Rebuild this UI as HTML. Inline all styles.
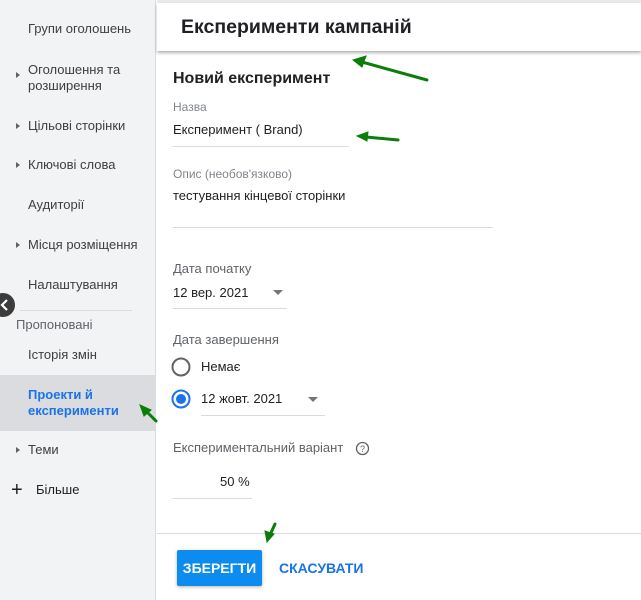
<!DOCTYPE html>
<html><head><meta charset="utf-8">
<style>
*{margin:0;padding:0;box-sizing:border-box}
body{width:641px;height:600px;overflow:hidden;background:#fff;font-family:"Liberation Sans","Noto Sans CJK SC",sans-serif;position:relative;color:#202124}
.a{position:absolute;white-space:nowrap}
.side{position:absolute;left:0;top:0;width:156px;height:600px;background:#f1f3f4;border-right:1px solid #dadce0}
.si{font-size:13px;color:#3c4043;line-height:16px}
.tri{position:absolute;width:0;height:0;border-top:3px solid transparent;border-bottom:3px solid transparent;border-left:4px solid #5f6368}
.lbl{font-size:12px;color:#80868b;line-height:14px}
.lbl2{font-size:13px;color:#5f6368;line-height:16px}
.val{font-size:13px;color:#202124;line-height:16px}
.ul{position:absolute;height:1px;background:#dadce0}
.dd{position:absolute;width:0;height:0;border-left:5px solid transparent;border-right:5px solid transparent;border-top:5px solid #757575}
</style></head><body>
<div class="side">
  <div class="a si" style="left:28px;top:21px">Групи оголошень</div>
  <div class="tri" style="left:16px;top:72px"></div>
  <div class="a si" style="left:28px;top:62px">Оголошення та</div>
  <div class="a si" style="left:28px;top:78px">розширення</div>
  <div class="tri" style="left:16px;top:123px"></div>
  <div class="a si" style="left:28px;top:118px">Цільові сторінки</div>
  <div class="tri" style="left:16px;top:162px"></div>
  <div class="a si" style="left:28px;top:157px">Ключові слова</div>
  <div class="a si" style="left:28px;top:197px">Аудиторії</div>
  <div class="tri" style="left:16px;top:242px"></div>
  <div class="a si" style="left:28px;top:237px">Місця розміщення</div>
  <div class="a si" style="left:28px;top:277px">Налаштування</div>
  <div style="position:absolute;left:20px;top:310px;width:112px;height:1px;background:#dadce0"></div>
  <div class="a si" style="left:16px;top:317px;color:#5f6368">Пропоновані</div>
  <div class="a si" style="left:28px;top:347px">Історія змін</div>
  <div style="position:absolute;left:0;top:375px;width:156px;height:56px;background:#dadce0"></div>
  <div class="a si" style="left:28px;top:387px;color:#1a73e8;font-weight:bold">Проекти й</div>
  <div class="a si" style="left:28px;top:403px;color:#1a73e8;font-weight:bold">експерименти</div>
  <div class="tri" style="left:16px;top:447px"></div>
  <div class="a si" style="left:28px;top:442px">Теми</div>
  <div class="a" style="left:11px;top:481px;font-size:20px;line-height:18px;color:#202124">+</div>
  <div class="a si" style="left:36px;top:482px;color:#202124">Більше</div>
</div>
<svg class="a" style="left:0;top:0" width="641" height="600">
  <circle cx="3" cy="305" r="12" fill="#3c3c3c"/>
  <path d="M7 300l-5 5 5 5" stroke="#fff" stroke-width="2.2" fill="none"/>
</svg>
<div style="position:absolute;left:157px;top:0;width:484px;height:3px;background:#e8eaed"></div>
<div style="position:absolute;left:157px;top:3px;width:484px;height:48px;background:#fff;box-shadow:0 2px 3px rgba(0,0,0,.3)"></div>
<div class="a" style="left:181px;top:15px;font-size:19.5px;font-weight:bold;line-height:24px;color:#202124">Експерименти кампаній</div>
<div class="a" style="left:173px;top:69px;font-size:16px;font-weight:bold;line-height:19px;color:#202124">Новий експеримент</div>
<div class="a lbl" style="left:173px;top:100px">Назва</div>
<div class="a val" style="left:173px;top:122px">Експеримент ( Brand)</div>
<div class="ul" style="left:173px;top:146px;width:176px"></div>
<div class="a lbl" style="left:173px;top:167px">Опис (необов'язково)</div>
<div class="a val" style="left:173px;top:188px">тестування кінцевої сторінки</div>
<div class="ul" style="left:173px;top:227px;width:320px"></div>
<div class="a lbl2" style="left:173px;top:261px">Дата початку</div>
<div class="a val" style="left:173px;top:285px">12 вер. 2021</div>
<div class="dd" style="left:273px;top:290px"></div>
<div class="ul" style="left:173px;top:308px;width:114px"></div>
<div class="a lbl2" style="left:173px;top:332px">Дата завершення</div>
<svg class="a" style="left:170px;top:356px" width="24" height="56">
  <circle cx="11" cy="11" r="8.5" fill="none" stroke="#5f6368" stroke-width="2"/>
  <circle cx="11" cy="43" r="8.5" fill="none" stroke="#1a73e8" stroke-width="2"/>
  <circle cx="11" cy="43" r="5" fill="#1a73e8"/>
</svg>
<div class="a val" style="left:201px;top:359px">Немає</div>
<div class="a val" style="left:201px;top:391px">12 жовт. 2021</div>
<div class="dd" style="left:308px;top:397px"></div>
<div class="ul" style="left:201px;top:415px;width:124px"></div>
<div class="a lbl2" style="left:173px;top:440px">Експериментальний варіант</div>
<svg class="a" style="left:355px;top:441px" width="15" height="15">
  <circle cx="7.5" cy="7.5" r="6" fill="none" stroke="#5f6368" stroke-width="1.3"/>
  <text x="7.5" y="11" font-size="9" text-anchor="middle" fill="#5f6368" font-family="Liberation Sans">?</text>
</svg>
<div class="a val" style="left:220px;top:474px">50 %</div>
<div class="ul" style="left:173px;top:498px;width:79px"></div>
<div style="position:absolute;left:157px;top:533px;width:484px;height:1px;background:#dadce0"></div>
<div class="a" style="left:177px;top:550px;width:85px;height:36px;background:#0d8cf0;border-radius:2px;box-shadow:0 1px 3px rgba(0,0,0,.3);color:#fff;font-weight:bold;font-size:14px;line-height:36px;text-align:center">ЗБЕРЕГТИ</div>
<div class="a" style="left:279px;top:560px;color:#1a73e8;font-weight:bold;font-size:14px;line-height:16px">СКАСУВАТИ</div>
<svg class="a" style="left:0;top:0" width="641" height="600">
  <g stroke="#0a7d0a" stroke-width="3" fill="#0a7d0a" stroke-linecap="round">
    <line x1="427" y1="80" x2="362" y2="62"/>
    <polygon points="353,60 366,56 362,67" stroke-width="1"/>
    <line x1="398" y1="140" x2="366" y2="137"/>
    <polygon points="357,136 368,132 367,141" stroke-width="1"/>
    <line x1="156" y1="421" x2="146" y2="411"/>
    <polygon points="140,405 151,410 144,416" stroke-width="1"/>
    <line x1="275" y1="524" x2="270" y2="535"/>
    <polygon points="267,542 265,531 274,534" stroke-width="1"/>
  </g>
</svg>
</body></html>
